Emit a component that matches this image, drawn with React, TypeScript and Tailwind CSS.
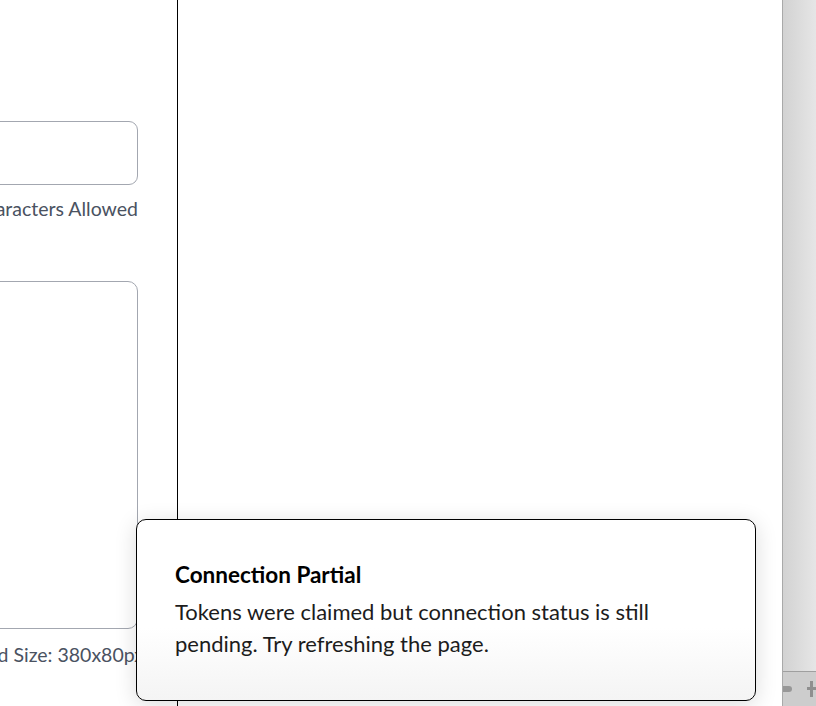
import React from 'react';

const Toast: React.FC<{ title: string; message: string }> = ({ title, message }) => (
  <div className="absolute left-[136px] top-[519px] w-[620px] rounded-[10px] border border-black bg-gradient-to-b from-white from-60% to-[#f4f4f4] pl-[38px] pr-[80px] pt-[41px] pb-[40px] shadow-[0_4px_22px_rgba(0,0,0,0.14)]">
    <h3 className="text-[22.5px] leading-[28px] font-bold text-black">{title}</h3>
    <p className="mt-[7px] text-[22px] leading-[32px] text-[#1c1c1c]">{message}</p>
  </div>
);

const FormColumn: React.FC = () => (
  <div className="w-[178px] shrink-0 overflow-hidden border-r border-black">
    <div className="ml-[-362px] flex w-[540px] flex-col pr-[40px] pt-[121px]">
      <input
        type="text"
        className="h-[64px] w-full rounded-[9px] border border-[#a3a7b0] bg-white px-4 text-[18px] outline-none"
      />
      <span className="mt-[10px] self-end text-[19.5px] leading-[28px] text-[#4a5261]">0/50 Characters Allowed</span>

      <textarea className="mt-[58px] h-[348px] w-full resize-none rounded-[10px] border border-[#a3a7b0] bg-white outline-none" />
      <span className="mt-[12px] mr-[-6px] self-end whitespace-nowrap text-[19.5px] leading-[28px] text-[#4a5261]">
        Recommended Size: 380x80px
      </span>
    </div>
  </div>
);

const SideRail: React.FC = () => (
  <div className="flex w-[34px] shrink-0 flex-col border-l border-[#a9a9a9] bg-gradient-to-r from-[#d2d2d2] to-[#e6e6e6]">
    <div className="flex-1" />
    <div className="flex h-[35px] items-center gap-[15px] border-t border-[#9f9f9f] bg-[#cdcdcd]">
      <span className="h-[6px] w-[11px] rounded-r-full bg-[#979797]" />
      <span className="relative h-[16px] w-[10px]">
        <span className="absolute left-0 top-[6px] h-[3px] w-[10px] bg-[#8f8f8f]" />
        <span className="absolute left-[3px] top-0 h-[16px] w-[3px] bg-[#8f8f8f]" />
      </span>
    </div>
  </div>
);

export default function App() {
  return (
    <div className="relative flex h-[706px] w-[816px] overflow-hidden bg-white font-['Lato','Noto_Sans',sans-serif]">
      <FormColumn />
      <div className="flex-1 bg-white" />
      <SideRail />
      <Toast
        title="Connection Partial"
        message="Tokens were claimed but connection status is still pending. Try refreshing the page."
      />
    </div>
  );
}
